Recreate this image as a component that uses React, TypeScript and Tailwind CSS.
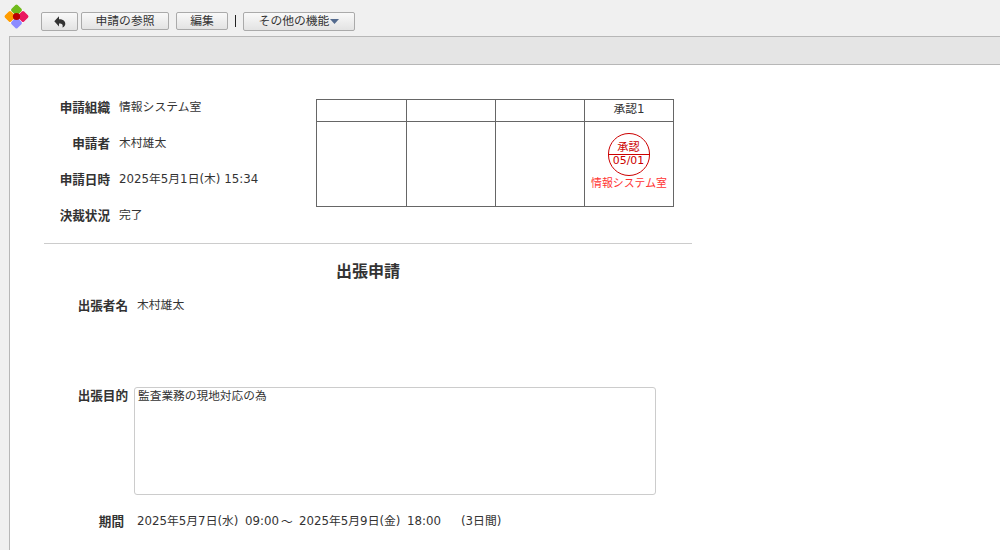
import type { ReactNode } from 'react';

const INFO = [
  { label: '申請組織', value: '情報システム室' },
  { label: '申請者', value: '木村雄太' },
  { label: '申請日時', value: '2025年5月1日(木) 15:34' },
  { label: '決裁状況', value: '完了' },
];

const APPROVERS = ['', '', '', '承認1'];

function ToolButton({ className, children }: { className: string; children: ReactNode }) {
  return (
    <button
      className={`flex items-center justify-center rounded-[2px] border border-[#aaa] bg-linear-to-b from-[#f9f9f9] to-[#e3e3e3] leading-none whitespace-nowrap ${className}`}
    >
      {children}
    </button>
  );
}

function Logo() {
  return (
    <svg width="27" height="27" viewBox="0 0 27 27" className="mt-[3px] ml-[3px] shrink-0">
      <rect x="4.5" y="4.5" width="18" height="18" rx="2" transform="rotate(45 13.5 13.5)" fill="#fff" />
      <rect x="9.2" y="2.7" width="8.6" height="8.6" rx="1.6" transform="rotate(45 13.5 7)" fill="#6fba1b" />
      <rect x="2.7" y="9.2" width="8.6" height="8.6" rx="1.6" transform="rotate(45 7 13.5)" fill="#ff9c00" />
      <rect x="15.7" y="9.2" width="8.6" height="8.6" rx="1.6" transform="rotate(45 20 13.5)" fill="#ea1860" />
      <rect x="9.2" y="15.7" width="8.6" height="8.6" rx="1.6" transform="rotate(45 13.5 20)" fill="#8c8cff" />
      <circle cx="13.5" cy="13.5" r="3.6" fill="#b90000" />
    </svg>
  );
}

function Stamp() {
  return (
    <div className="flex flex-col items-center text-[10.9px] text-[#c00]">
      <div className="mt-[11px] mr-px flex h-[43px] w-[42px] flex-col items-center rounded-full border border-[#c00] leading-none">
        <div className="flex h-[21px] w-full items-end justify-center border-b border-[#c00] pb-px text-[11.2px]">承認</div>
        <div className="mt-px">05/01</div>
      </div>
      <div className="mt-px leading-[14px] whitespace-nowrap text-[#f33]">情報システム室</div>
    </div>
  );
}

function Field({ label, children }: { label: string; children: ReactNode }) {
  return (
    <div className="flex">
      <div className="mt-px w-[84px] shrink-0 text-right text-[12.6px] leading-5 font-bold">{label}</div>
      {children}
    </div>
  );
}

export default function App() {
  return (
    <div className="flex h-[550px] w-[1000px] flex-col overflow-hidden bg-[#f0f0f0] font-['DejaVu_Sans','Noto_Sans_CJK_JP',sans-serif] text-[11.8px] text-[#333]">
      <header className="flex h-9 shrink-0 items-start">
        <Logo />
        <div className="mt-3 ml-[11px] flex items-start">
          <ToolButton className="h-[19px] w-[37px]">
            <svg width="12" height="12" viewBox="0 0 12 12" fill="#333">
              <path d="M5 .3v2.9c4.2 0 6.3 1.8 6.3 4.5 0 1.8-1 3.2-2.9 3.8.9-2.7-.1-4.1-3.4-4.1v3L.3 5.3z" />
            </svg>
          </ToolButton>
          <ToolButton className="ml-[3px] h-[18px] w-[88px] pt-px">申請の参照</ToolButton>
          <ToolButton className="ml-[7px] h-[18px] w-[52px] pt-px">編集</ToolButton>
          <span className="mt-[3px] ml-[7px] h-3 w-px bg-[#222]" />
          <ToolButton className="ml-[7px] h-[19px] w-[112px]">
            <span>その他の機能</span>
            <svg width="9" height="5" viewBox="0 0 9 5" fill="#536a8e" className="ml-px">
              <path d="M0 0h9L4.5 5z" />
            </svg>
          </ToolButton>
        </div>
      </header>

      <main className="ml-[9px] flex-1 border-t border-l border-[#b7b7b7] bg-white">
        <div className="h-7 border-b border-[#b7b7b7] bg-[#e5e5e5]" />

        <div className="ml-[34px] w-[648px]">
          <section className="flex h-[179px] border-b border-[#ccc] pt-6">
            <div className="w-[272px]">
              {INFO.map((row) => (
                <div key={row.label} className="flex h-9">
                  <div className="w-[66px] pt-[9px] text-right text-[12.6px] leading-5 font-bold">{row.label}</div>
                  <div className="ml-[9px] pt-2 leading-5 whitespace-nowrap">{row.value}</div>
                </div>
              ))}
            </div>
            <div className="mt-2.5 grid h-[108px] w-[358px] grid-cols-[90px_89px_89px_89px] grid-rows-[22px_85px] border-t border-l border-[#666]">
              {APPROVERS.map((name, i) => (
                <div key={i} className="border-r border-b border-[#666] text-center leading-[19px]">
                  {name}
                </div>
              ))}
              {APPROVERS.map((name, i) => (
                <div key={i} className="border-r border-b border-[#666]">
                  {name && <Stamp />}
                </div>
              ))}
            </div>
          </section>

          <h1 className="mt-4 text-center text-[16px] leading-6 font-bold">出張申請</h1>

          <div className="mt-[11px] h-[90px]">
            <Field label="出張者名">
              <div className="ml-[9px] leading-5">木村雄太</div>
            </Field>
          </div>

          <Field label="出張目的">
            <textarea
              className="mt-[2px] ml-1.5 h-[108px] w-[522px] resize-none rounded-[3px] border border-[#ccc] bg-white px-[3px] py-0 text-[11.7px] leading-4 outline-none"
              defaultValue="監査業務の現地対応の為"
            />
          </Field>

          <div className="mt-4 flex">
            <div className="mt-px w-20 text-right text-[12.6px] leading-5 font-bold">期間</div>
            <div className="ml-[13px] flex leading-5 whitespace-nowrap">
              <span className="w-[108px]">2025年5月7日(水)</span>
              <span className="w-9">09:00</span>
              <span className="w-[18px] pt-px">～</span>
              <span className="w-[108px]">2025年5月9日(金)</span>
              <span className="w-[54px]">18:00</span>
              <span>(3日間)</span>
            </div>
          </div>
        </div>
      </main>
    </div>
  );
}
